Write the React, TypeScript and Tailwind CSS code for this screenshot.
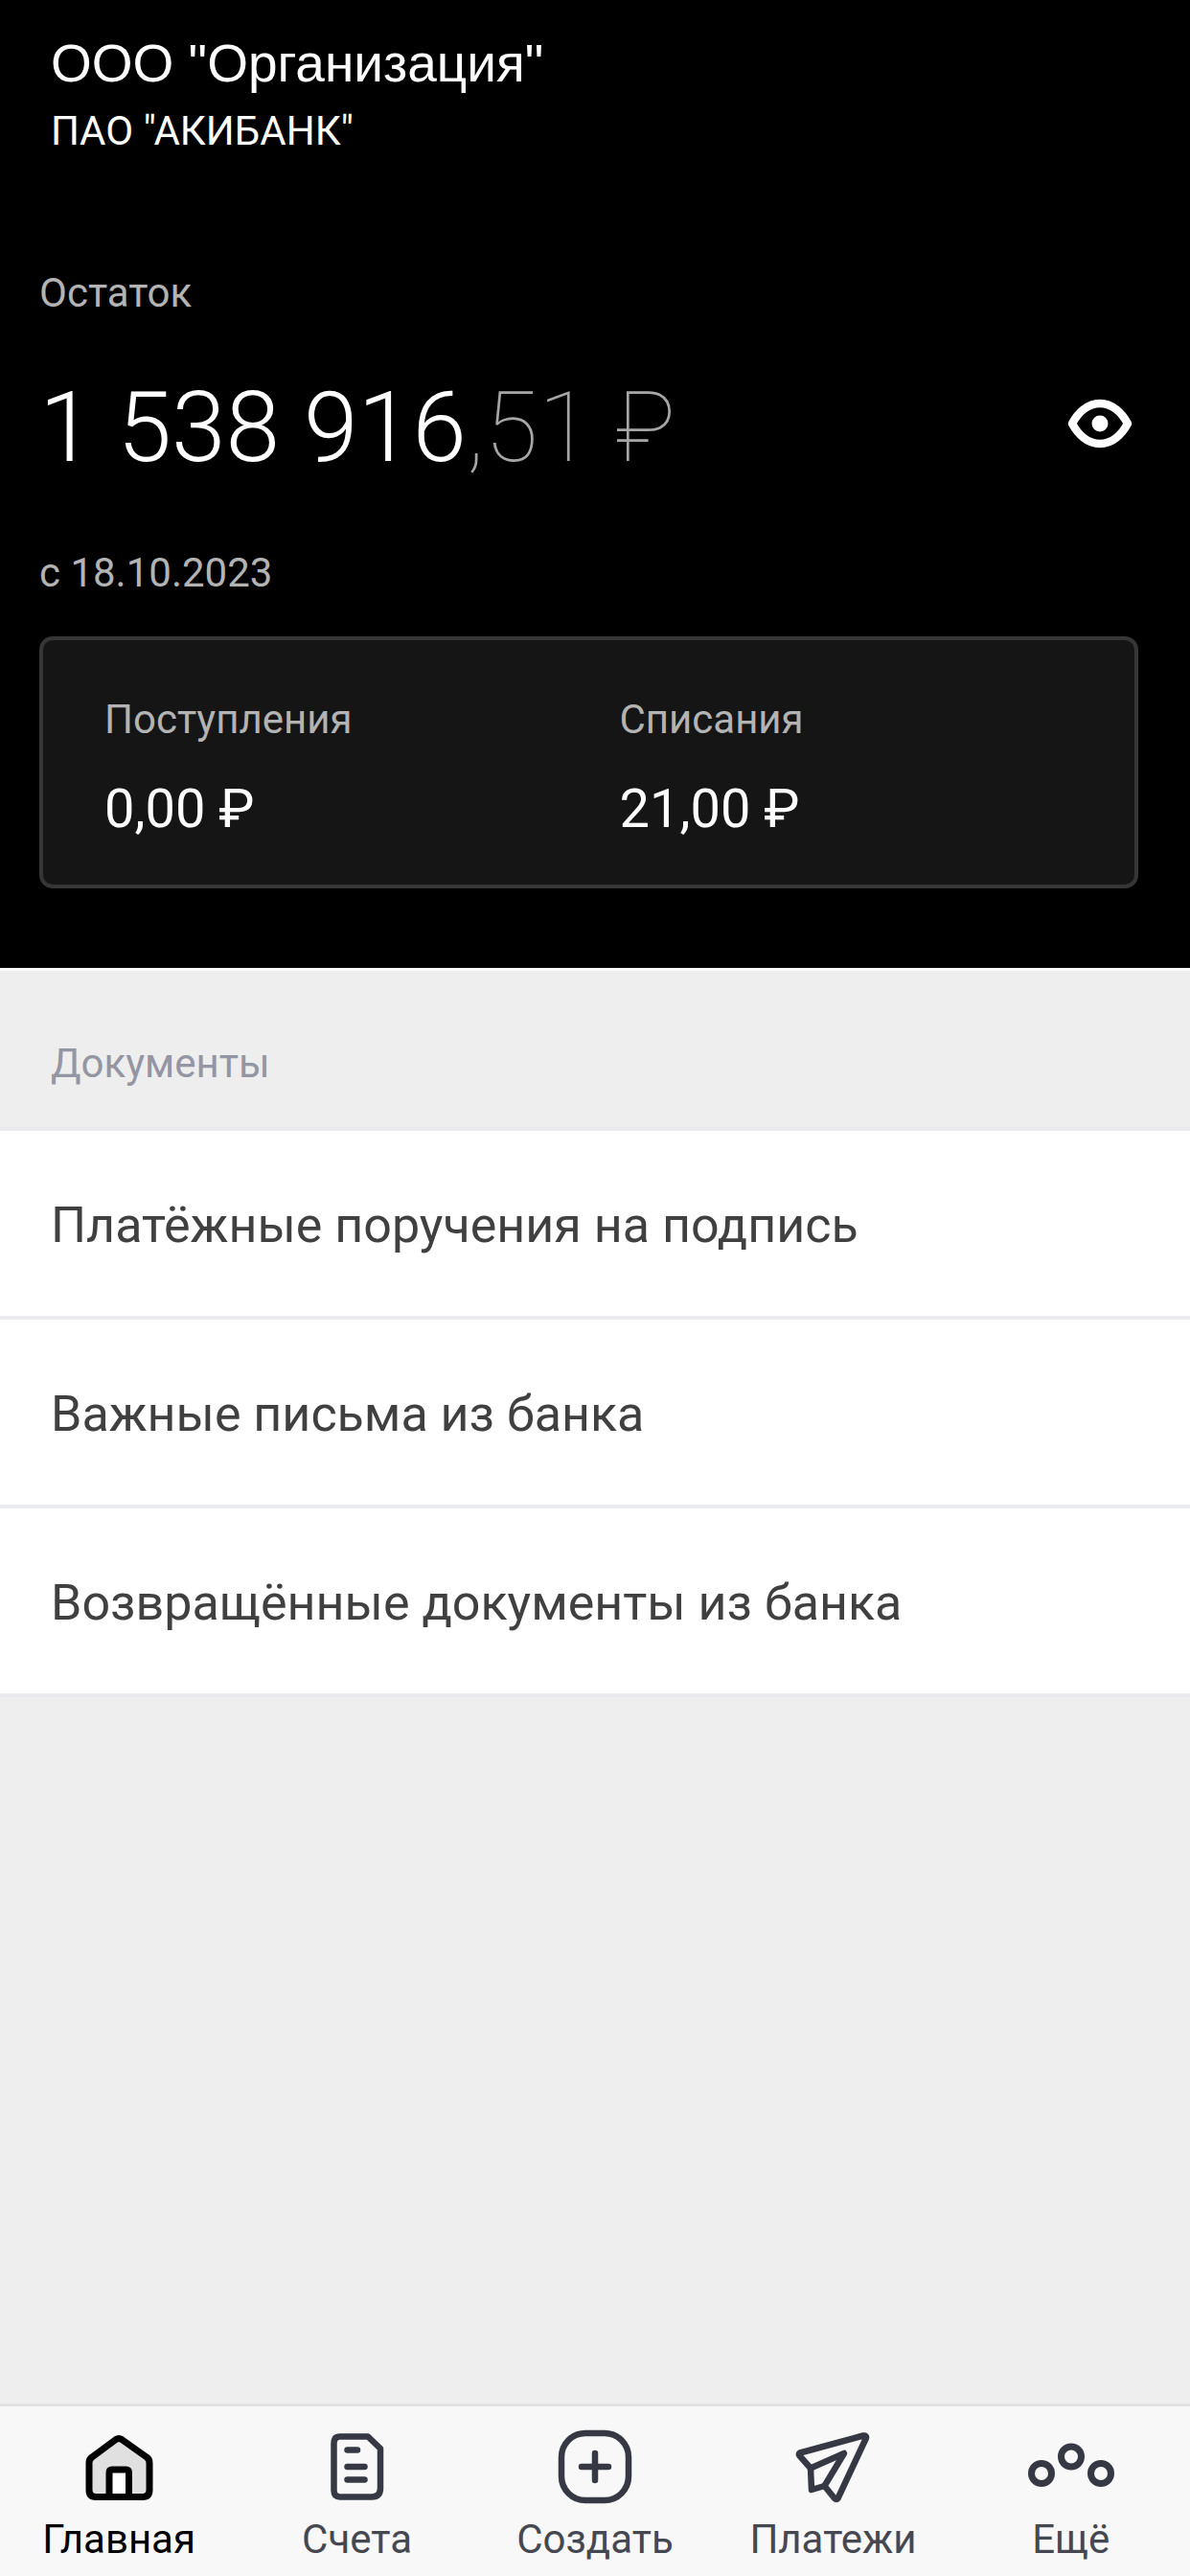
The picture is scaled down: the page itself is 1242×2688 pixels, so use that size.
import { useState } from "react";
import type { ReactNode } from "react";

type NavItem = {
    title: string
    icon: ReactNode
}

const documents = [
    "Платёжные поручения на подпись",
    "Важные письма из банка",
    "Возвращённые документы из банка",
]

function HomeIcon() {
    return (
        <svg viewBox="0 0 80 80" className="size-20" fill="none" stroke="currentColor" strokeWidth="7" strokeLinejoin="round">
            <path d="M9 36q0-4 3-6L37 11.500q3-2 6 0L69 30q3 2 3 6V64q0 7.500-7 7.500H16q-7 0-7-7.500Z" fill="#e0e0e0" />
            <path d="M30 71.500V46q0-3 3-3H47.500q3 0 3 3V71.500Z" fill="#fff" />
        </svg>
    )
}

function AccountsIcon() {
    return (
        <svg viewBox="0 0 80 80" className="size-20" fill="none" stroke="currentColor" strokeWidth="6.5" strokeLinecap="round" strokeLinejoin="round">
            <path d="M22 8.500H51L64 21V62q0 9.500-9 9.500H22q-6.500 0-6.500-7V15.500q0-7 6.500-7Z" />
            <path d="M29.500 22.500H40M29.500 40H47.500M29.500 53.500H47.500" />
        </svg>
    )
}

function CreateIcon() {
    return (
        <svg viewBox="0 0 80 80" className="size-20" fill="none" stroke="currentColor" strokeWidth="6.5" strokeLinecap="round">
            <rect x="5" y="5" width="70" height="70" rx="25" />
            <path d="M40 26V54M26 40H54" />
        </svg>
    )
}

function PaymentsIcon() {
    return (
        <svg viewBox="0 0 80 80" className="size-20" fill="none" stroke="currentColor" strokeWidth="6.5" strokeLinecap="round" strokeLinejoin="round">
            <path d="M72 7.500 6 25.500q-2 1-.5 3L17 41.500 52 26 31.500 60 42 73q2 2 3.500 0L75 10q.5-3-3-2.500Z" />
            <path d="M17 41.500 18 64 31.500 60" />
        </svg>
    )
}

function MoreIcon() {
    return (
        <svg viewBox="0 0 80 80" className="size-20 overflow-visible" fill="none" stroke="currentColor" strokeWidth="7">
            <circle cx="9" cy="47" r="10.5" />
            <circle cx="40" cy="29.500" r="10.5" />
            <circle cx="71" cy="47" r="10.5" />
        </svg>
    )
}

function EyeIcon() {
    return (
        <svg viewBox="0 0 80 80" className="size-20" fill="none" stroke="currentColor" strokeWidth="8.5" strokeLinejoin="round">
            <path d="M11 40C17 29 27 19 40 19S63 29 69 40C63 51 53 61 40 61S17 51 11 40Z" />
            <circle cx="40" cy="40" r="8.5" fill="currentColor" stroke="none" />
        </svg>
    )
}

const navItems: NavItem[] = [
    { title: "Главная", icon: <HomeIcon /> },
    { title: "Счета", icon: <AccountsIcon /> },
    { title: "Создать", icon: <CreateIcon /> },
    { title: "Платежи", icon: <PaymentsIcon /> },
    { title: "Ещё", icon: <MoreIcon /> },
]

function Turnover({ label, value }: { label: string; value: string }) {
    return (
        <div>
            <p className="text-[42px] leading-[48px] text-[#b3b3b3]">{label}</p>
            <p className="mt-[37px] text-[56px] leading-[64px] text-white">{value}</p>
        </div>
    )
}

function Balance() {
    const [visible, setVisible] = useState(true)

    return (
        <header className="bg-black pl-[41px] pr-[54px] pt-[34px] pb-[83px] text-white">
            <div className="pl-3">
                <h1 className="font-['Liberation_Sans',Arial,sans-serif] text-[55px] leading-[64px]">ООО "Организация"</h1>
                <p className="mt-[15px] text-[42px] leading-[48px]">ПАО "АКИБАНК"</p>
            </div>
            <p className="mt-[121px] text-[42px] leading-[48px] text-[#b3b3b3]">Остаток</p>
            <div className="mt-14 flex items-center justify-between">
                <p className="text-[102px] leading-[120px] font-light whitespace-nowrap">
                    {visible ? "1 538 916" : "••••"}
                    <span className="font-thin text-[#a6a6a6]">{visible ? ",51 ₽" : " ₽"}</span>
                </p>
                <button type="button" aria-label="Показать остаток" className="mb-2" onClick={() => setVisible(!visible)}>
                    <EyeIcon />
                </button>
            </div>
            <p className="mt-[68px] text-[42px] leading-[48px] text-[#b3b3b3]">с 18.10.2023</p>
            <div className="mt-[42px] grid grid-cols-2 rounded-[14px] border-4 border-[#363636] bg-[#151515] pt-[59px] pb-[47px] pl-16">
                <Turnover label="Поступления" value="0,00 ₽" />
                <Turnover label="Списания" value="21,00 ₽" />
            </div>
        </header>
    )
}

export default function App() {
    const [active, setActive] = useState("Главная")

    return (
        <div className="flex min-h-screen w-full flex-col bg-[#eeeeee] font-[Roboto,sans-serif]">
            <Balance />
            <main className="flex-1 border-t-[3px] border-white">
                <h2 className="px-[53px] pt-[73px] pb-[42px] text-[42px] leading-[48px] text-[#9496a3]">Документы</h2>
                <ul className="divide-y-4 divide-[#ebecef] border-y-4 border-[#e8eaed] bg-white">
                    {documents.map((title) => (
                        <li key={title}>
                            <button type="button" className="w-full px-[53px] pt-[69px] pb-16 text-left text-[52px] leading-[60px] text-[#404040]">
                                {title}
                            </button>
                        </li>
                    ))}
                </ul>
            </main>
            <nav className="grid grid-cols-5 border-t-[3px] border-[#e2e2e2] bg-[#f8f8f8]">
                {navItems.map((item) => (
                    <button
                        key={item.title}
                        type="button"
                        onClick={() => setActive(item.title)}
                        className={`flex flex-col items-center gap-3 pt-[23px] pb-[14px] ${active === item.title ? "text-black" : "text-[#363944]"}`}
                    >
                        {item.icon}
                        <span className={`text-[42px] leading-[48px] ${active === item.title ? "text-black" : "text-[#464851]"}`}>{item.title}</span>
                    </button>
                ))}
            </nav>
        </div>
    )
}
